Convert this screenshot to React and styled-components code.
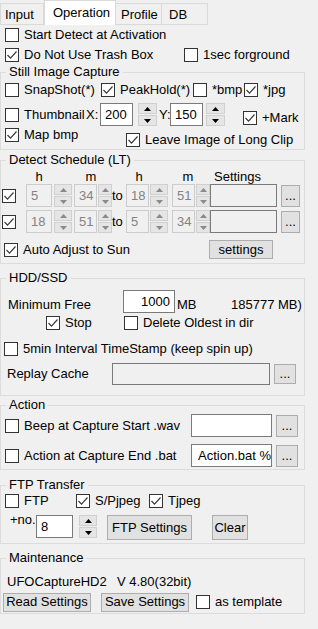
import React from "react";
import styled, { createGlobalStyle } from "styled-components";

const GlobalStyle = createGlobalStyle`
  body {
    margin: 0;
    background: #f0f0f0;
    font-family: "Liberation Sans", Arial, sans-serif;
    font-size: 13px;
    color: #000;
  }
`;

const Window = styled.div`
  width: 318px;
  height: 629px;
  display: flex;
  flex-direction: column;
  overflow: hidden;
  background: #f0f0f0;
`;

const TabBar = styled.div`
  display: flex;
  align-items: flex-end;
  height: 25px;
`;

const Tab = styled.div`
  box-sizing: border-box;
  width: ${(p) => p.$w}px;
  height: ${(p) => (p.$active ? 25 : 22)}px;
  padding-left: ${(p) => p.$pl}px;
  padding-top: ${(p) => (p.$active ? 5 : 4)}px;
  line-height: 14px;
  background: ${(p) => (p.$active ? "#fff" : "#f0f0f0")};
  border: 1px solid #d9d9d9;
  border-bottom: ${(p) => (p.$active ? "none" : "1px solid #d9d9d9")};
  border-left: ${(p) => (p.$first || p.$active ? "1px solid #d9d9d9" : "none")};
  white-space: nowrap;
`;

const Row = styled.div`
  display: flex;
  align-items: ${(p) => p.$align || "center"};
  height: ${(p) => p.$h}px;
  margin-top: ${(p) => p.$mt || 0}px;
  margin-bottom: ${(p) => p.$mb || 0}px;
  flex-shrink: 0;
`;

const Group = styled.fieldset`
  box-sizing: border-box;
  width: 305px;
  margin: ${(p) => p.$mt || 0}px 0 0 0;
  padding: 0 0 ${(p) => p.$pb || 0}px 0;
  border: 1px solid #dcdcdc;
  min-width: 0;
  flex-shrink: 0;
`;

const Legend = styled.legend`
  margin-left: 5px;
  padding: 0 3px;
  line-height: 14px;
  height: 14px;
`;

const CheckLabel = styled.label`
  display: flex;
  align-items: center;
  flex-shrink: 0;
  width: ${(p) => (p.$w ? `${p.$w}px` : "auto")};
  margin-left: ${(p) => p.$ml || 0}px;
  margin-top: ${(p) => p.$mt || 0}px;
  margin-bottom: ${(p) => p.$mb || 0}px;
  align-self: ${(p) => p.$self || "auto"};
  line-height: 14px;
  white-space: nowrap;
`;

const Box = styled.span`
  box-sizing: border-box;
  width: 14px;
  height: 14px;
  border: 1px solid #333;
  background: #fff;
  display: flex;
  align-items: center;
  justify-content: center;
  flex-shrink: 0;
`;

const CheckText = styled.span`
  margin-left: 5px;
`;

const Text = styled.span`
  display: block;
  flex-shrink: 0;
  width: ${(p) => (p.$w ? `${p.$w}px` : "auto")};
  margin-left: ${(p) => p.$ml || 0}px;
  margin-top: ${(p) => p.$mt || 0}px;
  line-height: ${(p) => p.$lh || 14}px;
  text-align: ${(p) => p.$align || "left"};
  white-space: nowrap;
`;

const Field = styled.div`
  box-sizing: border-box;
  flex-shrink: 0;
  width: ${(p) => p.$w}px;
  height: ${(p) => p.$h || 23}px;
  margin-left: ${(p) => p.$ml || 0}px;
  padding: 0 ${(p) => p.$pr || 4}px 0 ${(p) => p.$pl || 4}px;
  border: 1px solid ${(p) => (p.$disabled ? "#cccccc" : "#7a7a7a")};
  background: ${(p) => (p.$white ? "#fff" : "#f0f0f0")};
  color: ${(p) => (p.$disabled ? "#838383" : "#000")};
  display: flex;
  align-items: center;
  justify-content: ${(p) => (p.$right ? "flex-end" : "flex-start")};
  white-space: nowrap;
  overflow: hidden;
`;

const SpinWrap = styled.div`
  flex-shrink: 0;
  width: ${(p) => p.$w}px;
  height: ${(p) => p.$h || 23}px;
  margin-left: ${(p) => p.$ml || 0}px;
  display: flex;
  flex-direction: column;
  gap: 1px;
`;

const SpinHalf = styled.div`
  box-sizing: border-box;
  flex: 1;
  background: #e5e5e5;
  border: 1px solid #d0d0d0;
  display: flex;
  align-items: center;
  justify-content: center;
`;

const Button = styled.div`
  box-sizing: border-box;
  flex-shrink: 0;
  width: ${(p) => p.$w}px;
  height: ${(p) => p.$h}px;
  margin-left: ${(p) => p.$ml || 0}px;
  background: #e1e1e1;
  border: 1px solid #adadad;
  display: flex;
  align-items: center;
  justify-content: center;
  white-space: nowrap;
  line-height: 14px;
`;

const Check = ({ label, checked, ...rest }) => (
  <CheckLabel {...rest}>
    <Box>
      {checked && (
        <svg width="12" height="12" viewBox="0 0 12 12">
          <polyline points="1.5,6 4.5,9.2 10.5,2.5" fill="none" stroke="#3c3c3c" strokeWidth="1.2" />
        </svg>
      )}
    </Box>
    {label && <CheckText>{label}</CheckText>}
  </CheckLabel>
);

const Spin = ({ disabled, ...rest }) => {
  const c = disabled ? "#8a8a8a" : "#000";
  return (
    <SpinWrap {...rest}>
      <SpinHalf>
        <svg width="7" height="4" viewBox="0 0 7 4">
          <polygon points="0,4 3.5,0 7,4" fill={c} />
        </svg>
      </SpinHalf>
      <SpinHalf>
        <svg width="7" height="4" viewBox="0 0 7 4">
          <polygon points="0,0 7,0 3.5,4" fill={c} />
        </svg>
      </SpinHalf>
    </SpinWrap>
  );
};

const Dots = (props) => (
  <Button {...props}>...</Button>
);

const ScheduleRow = ({ from, fromM, to, toM, mb }) => (
  <Row $h={23} $mb={mb}>
    <Check checked $ml={1} />
    <Field $w={26} $ml={10} $disabled>{from}</Field>
    <Spin $w={18} $ml={2} disabled />
    <Field $w={23} $ml={2} $disabled>{fromM}</Field>
    <Spin $w={14} $ml={1} disabled />
    <Text $w={14}>to</Text>
    <Field $w={23} $disabled>{to}</Field>
    <Spin $w={18} $ml={1} disabled />
    <Field $w={23} $ml={4} $disabled>{toM}</Field>
    <Spin $w={14} $ml={1} disabled />
    <Field $w={67} />
    <Dots $w={19} $h={22} $ml={4} />
  </Row>
);

export default function App() {
  return (
    <Window>
      <GlobalStyle />
      <TabBar>
        <Tab $w={44} $pl={4} $first>Input</Tab>
        <Tab $w={72} $pl={8} $active>Operation</Tab>
        <Tab $w={46} $pl={5}>Profile</Tab>
        <Tab $w={46} $pl={7}>DB</Tab>
      </TabBar>

      <Row $h={20}>
        <Check $ml={5} label="Start Detect at Activation" />
      </Row>
      <Row $h={20}>
        <Check $ml={5} $w={179} checked label="Do Not Use Trash Box" />
        <Check label="1sec forground" />
      </Row>

      <Group $pb={0}>
        <Legend>Still Image Capture</Legend>
        <Row $h={22}>
          <Check $ml={4} $w={96} label="SnapShot(*)" />
          <Check $w={92} checked label="PeakHold(*)" />
          <Check $w={51} label="*bmp" />
          <Check checked label="*jpg" />
        </Row>
        <Row $h={27}>
          <Check $ml={4} $w={81} label="Thumbnail" />
          <Text $w={14}>X:</Text>
          <Field $w={33} $white>200</Field>
          <Spin $w={19} $ml={5} />
          <Text $w={11} $ml={2}>Y:</Text>
          <Field $w={33} $white>150</Field>
          <Spin $w={19} $ml={3} />
          <Check $ml={18} $self="flex-end" $mb={3} checked label="+Mark" />
        </Row>
        <Row $h={21} $align="flex-start">
          <Check $ml={4} $w={121} checked label="Map bmp" />
          <Check $mt={5} checked label="Leave Image of Long Clip" />
        </Row>
      </Group>

      <Group $mt={3}>
        <Legend>Detect Schedule (LT)</Legend>
        <Row $h={17} $align="flex-end">
          <Text $w={20} $ml={28} $align="center">h</Text>
          <Text $w={20} $ml={32} $align="center">m</Text>
          <Text $w={20} $ml={28} $align="center">h</Text>
          <Text $w={20} $ml={29} $align="center">m</Text>
          <Text $ml={16}>Settings</Text>
        </Row>
        <ScheduleRow from="5" fromM="34" to="18" toM="51" mb={3} />
        <ScheduleRow from="18" fromM="51" to="5" toM="34" mb={3} />
        <Row $h={27}>
          <Check $ml={3} $w={205} checked label="Auto Adjust to Sun" />
          <Button $w={64} $h={19}>settings</Button>
        </Row>
      </Group>

      <Group $mt={7} $pb={9}>
        <Legend>HDD/SSD</Legend>
        <Row $h={28} $align="flex-end">
          <Text $ml={7} $w={115} $lh={16}>Minimum Free</Text>
          <Field $w={52} $white $right>1000</Field>
          <Text $ml={2} $w={54} $lh={16}>MB</Text>
          <Text $lh={16}>185777 MB)</Text>
        </Row>
        <Row $h={20}>
          <Check $ml={45} $w={78} checked label="Stop" />
          <Check label="Delete Oldest in dir" />
        </Row>
        <Row $h={27} $mt={2}>
          <Check $ml={3} label="5min Interval TimeStamp (keep spin up)" />
        </Row>
        <Row $h={24}>
          <Text $ml={6} $w={105}>Replay Cache</Text>
          <Field $w={158} $h={22} />
          <Dots $w={22} $h={20} $ml={4} />
        </Row>
      </Group>

      <Group $mt={2}>
        <Legend>Action</Legend>
        <Row $h={27}>
          <Check $ml={4} $w={186} label="Beep at Capture Start .wav" />
          <Field $w={81} $white />
          <Dots $w={22} $h={22} $ml={4} />
        </Row>
        <Row $h={27} $mt={3}>
          <Check $ml={4} $w={186} label="Action at Capture End .bat" />
          <Field $w={81} $white $pl={6}>Action.bat %</Field>
          <Dots $w={22} $h={22} $ml={4} />
        </Row>
      </Group>

      <Group $mt={8} $pb={3}>
        <Legend>FTP Transfer</Legend>
        <Row $h={18}>
          <Check $ml={4} $w={71} label="FTP" />
          <Check $w={73} checked label="S/Pjpeg" />
          <Check checked label="Tjpeg" />
        </Row>
        <Row $h={25} $mt={5} $align="flex-start">
          <Text $ml={9} $w={26} $mt={-2}>+no.</Text>
          <Field $w={37} $white>8</Field>
          <Spin $w={18} $ml={6} />
          <Button $w={85} $h={25} $ml={10}>FTP Settings</Button>
          <Button $w={36} $h={25} $ml={20}>Clear</Button>
        </Row>
      </Group>

      <Group $mt={7} $pb={1}>
        <Legend>Maintenance</Legend>
        <Row $h={20} $mt={7}>
          <Text $ml={6} $w={110}>UFOCaptureHD2</Text>
          <Text>V 4.80(32bit)</Text>
        </Row>
        <Row $h={20}>
          <Button $w={88} $h={19} $ml={2}>Read Settings</Button>
          <Button $w={88} $h={19} $ml={10}>Save Settings</Button>
          <Check $ml={7} label="as template" />
        </Row>
      </Group>
    </Window>
  );
}
